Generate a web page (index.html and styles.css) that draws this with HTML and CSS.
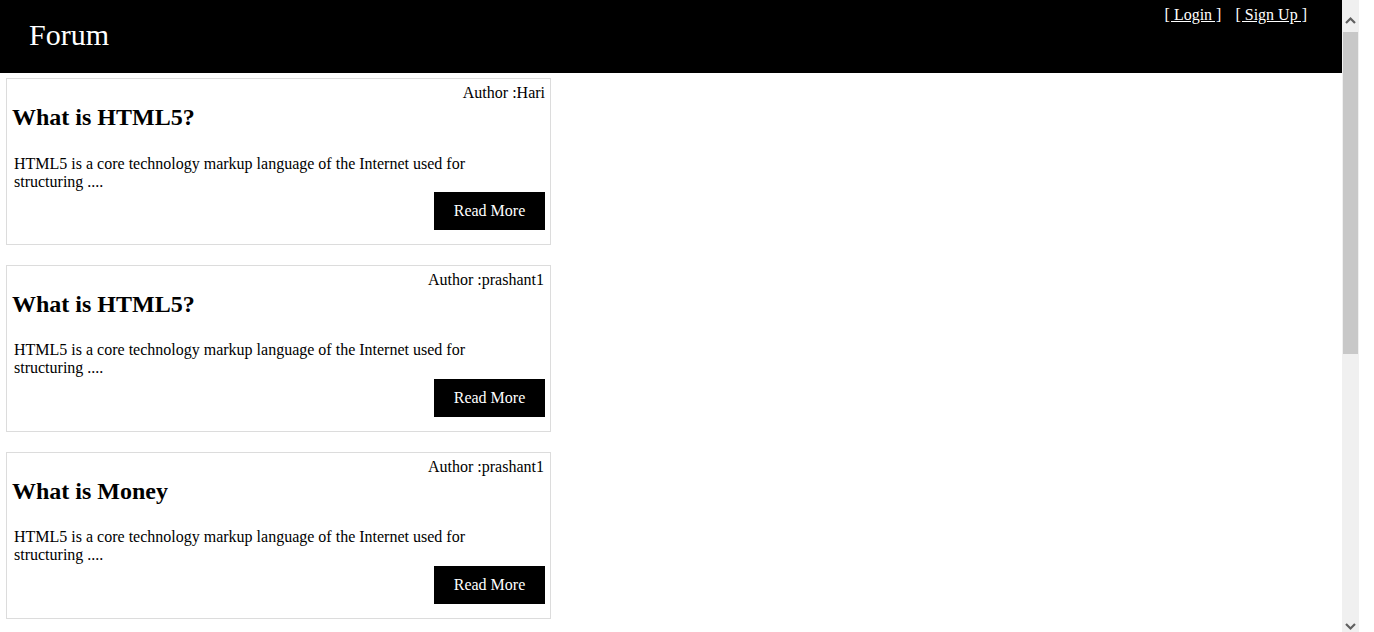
FILE: index.html
```html
<!DOCTYPE html>
<html lang="en">
<head>
<meta charset="utf-8">
<title>Forum</title>
<link rel="stylesheet" href="styles.css">
</head>
<body>
<div class="window">
  <div class="page">
    <header class="topbar">
      <div class="brand">Forum</div>
      <nav class="auth">
        <a href="#" class="auth-link">[ Login ]</a>
        <a href="#" class="auth-link">[ Sign Up ]</a>
      </nav>
    </header>
    <main class="posts">
      <article class="card">
        <div class="author">Author :Hari</div>
        <h2 class="title">What is HTML5?</h2>
        <p class="excerpt">HTML5 is a core technology markup language of the Internet used for structuring ....</p>
        <div class="actions"><button class="read-more">Read More</button></div>
      </article>
      <article class="card">
        <div class="author alt">Author :prashant1</div>
        <h2 class="title">What is HTML5?</h2>
        <p class="excerpt">HTML5 is a core technology markup language of the Internet used for structuring ....</p>
        <div class="actions"><button class="read-more">Read More</button></div>
      </article>
      <article class="card">
        <div class="author alt">Author :prashant1</div>
        <h2 class="title">What is Money</h2>
        <p class="excerpt">HTML5 is a core technology markup language of the Internet used for structuring ....</p>
        <div class="actions"><button class="read-more">Read More</button></div>
      </article>
    </main>
  </div>
  <div class="scrollbar">
    <div class="arrow">
      <svg width="11" height="8" viewBox="0 0 11 8"><path d="M1 7 L5.5 2.5 L10 7" fill="none" stroke="#606060" stroke-width="2.2"/></svg>
    </div>
    <div class="thumb"></div>
    <div class="track-rest"></div>
    <div class="arrow bottom">
      <svg width="11" height="8" viewBox="0 0 11 8"><path d="M1 1 L5.5 5.5 L10 1" fill="none" stroke="#606060" stroke-width="2.2"/></svg>
    </div>
  </div>
  <div class="gutter"></div>
</div>
</body>
</html>
```
FILE: styles.css
```css
html, body {
  margin: 0;
  padding: 0;
  background: #fff;
}
body {
  font-family: "Liberation Serif", "Times New Roman", serif;
  font-size: 16px;
  color: #000;
}
.window {
  display: flex;
  height: 632px;
  overflow: hidden;
}
.page {
  width: 1342px;
  flex: none;
}
.topbar {
  height: 73px;
  background: #000;
  display: flex;
  justify-content: space-between;
  align-items: flex-start;
  box-sizing: border-box;
  padding: 0 35px 0 29px;
}
.brand {
  color: #fff;
  font-size: 30px;
  line-height: 34px;
  margin-top: 18px;
}
.auth {
  display: flex;
  gap: 14px;
  margin-top: 6px;
  line-height: 18px;
}
.auth-link {
  color: #fff;
  text-decoration: underline;
}
.posts {
  padding: 5px 0 0 6px;
}
.card {
  width: 545px;
  box-sizing: border-box;
  border: 1px solid #dcdcdc;
  padding: 5px;
  margin-bottom: 20px;
}
.author {
  text-align: right;
  line-height: 18px;
}
.author.alt {
  padding-right: 1px;
}
.title {
  font-size: 24px;
  font-weight: bold;
  line-height: 28px;
  margin: 1px 0 24px;
}
.author.alt + .title {
  margin-bottom: 23px;
}
.excerpt {
  margin: 0 0 1px;
  padding-left: 2px;
  max-width: 470px;
  line-height: 18px;
}
.author.alt ~ .excerpt {
  margin-bottom: 2px;
}
.actions {
  display: flex;
  justify-content: flex-end;
  margin-bottom: 9px;
}
.read-more {
  background: #000;
  color: #fff;
  border: none;
  font-family: "Liberation Serif", "Times New Roman", serif;
  font-size: 16px;
  line-height: 18px;
  padding: 10px 0;
  width: 111px;
  height: 38px;
  box-sizing: border-box;
  white-space: nowrap;
  text-align: center;
  cursor: pointer;
}
.scrollbar {
  width: 17px;
  flex: none;
  background: #f0f0f0;
  display: flex;
  flex-direction: column;
}
.arrow {
  display: flex;
  align-items: center;
  justify-content: center;
  padding-top: 7px;
  box-sizing: border-box;
  height: 32px;
}
.arrow.bottom {
  height: 17px;
  padding-top: 8px;
  align-items: flex-start;
}
.thumb {
  height: 322px;
  margin: 0 1px;
  background: #c8c8c8;
}
.track-rest {
  flex: 1;
}
.gutter {
  flex: 1;
  background: #fff;
}
```
